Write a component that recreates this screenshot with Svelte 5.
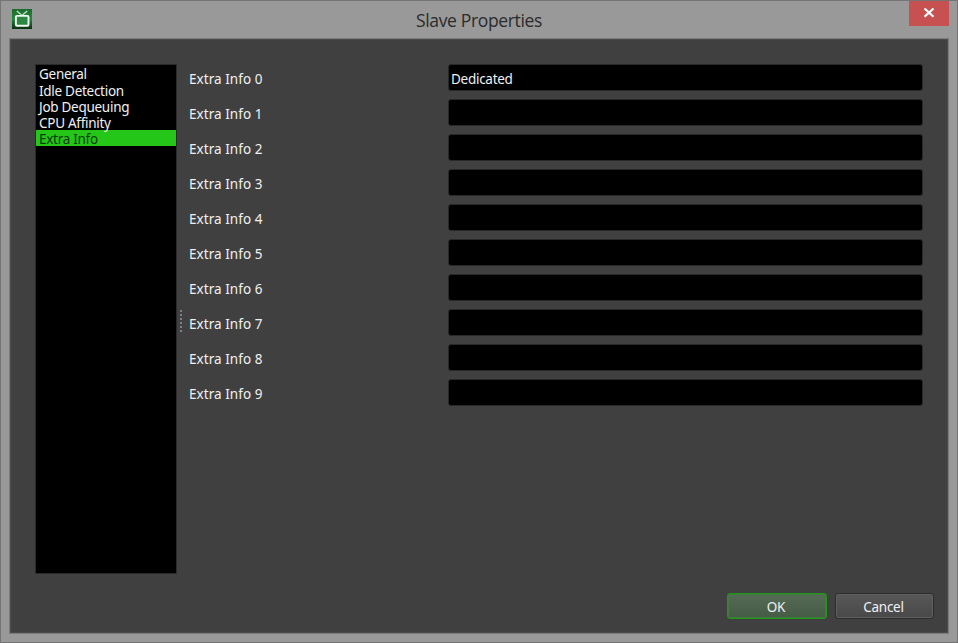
<script>
  const sections = ['General', 'Idle Detection', 'Job Dequeuing', 'CPU Affinity', 'Extra Info'];
  let selected = $state('Extra Info');
  const fields = Array.from({ length: 10 }, (_, i) => ({
    label: `Extra Info ${i}`,
    value: i === 0 ? 'Dedicated' : ''
  }));
</script>

<div class="window">
  <header>
    <svg class="logo" width="20" height="20" viewBox="0 0 20 20">
      <defs>
        <linearGradient id="tv" x1="0" y1="0" x2="0" y2="1">
          <stop offset="0" stop-color="#1c6b2c" />
          <stop offset=".5" stop-color="#25883b" />
          <stop offset="1" stop-color="#083011" />
        </linearGradient>
      </defs>
      <rect width="20" height="20" fill="url(#tv)" />
      <path d="M4.8 2 9.5 6M15.2 2 10.5 6" stroke="#b9dcc0" stroke-width="1.5" fill="none" />
      <rect x="3.9" y="6.9" width="12.6" height="9.8" rx="1" fill="#2a8840" stroke="#f2f8f2" stroke-width="1.9" />
    </svg>
    <h1>Slave Properties</h1>
    <button class="close" aria-label="Close">
      <svg width="12" height="10" viewBox="0 0 12 10"><path d="M1.5 .5 10.5 8.8M10.5 .5 1.5 8.8" stroke="#fff" stroke-width="2.2" /></svg>
    </button>
  </header>
  <main>
    <div class="content">
      <nav>
        {#each sections as section}
          <button class="item" class:selected={selected === section} onclick={() => (selected = section)}>{section}</button>
        {/each}
      </nav>
      <div class="splitter">
        {#each Array(6) as _}<i></i>{/each}
      </div>
      <div class="form">
        {#each fields as field}
          <label><span class="name">{field.label}</span><span class="input">{field.value}</span></label>
        {/each}
      </div>
    </div>
    <footer>
      <button class="action ok">OK</button>
      <button class="action">Cancel</button>
    </footer>
  </main>
</div>

<style>
  * { box-sizing: border-box; }
  .window {
    width: 958px;
    height: 643px;
    padding: 0 8px 8px;
    border: 1px solid #747474;
    background: #999;
    display: flex;
    flex-direction: column;
    font: 13.5px 'Noto Sans', 'Open Sans', sans-serif;
    letter-spacing: -.28px;
    color: #f0f0f0;
    overflow: hidden;
  }
  button { font: inherit; letter-spacing: inherit; border: 0; padding: 0; margin: 0; }
  header { height: 37px; flex: none; display: grid; grid-template-columns: 40px 1fr 40px; }
  .logo { margin: 8px 0 0 3px; }
  h1 {
    margin: 0;
    padding-top: 7px;
    text-align: center;
    font: 400 17.5px/25px 'Open Sans', sans-serif;
    letter-spacing: -.34px;
    color: #2b2b2b;
  }
  .close { width: 40px; height: 25px; background: #c75050; display: flex; align-items: center; justify-content: center; padding-bottom: 1px; }
  main {
    flex: 1;
    border: 1px solid #7b7b7b;
    background: #404040;
    box-shadow: inset 0 0 0 1px #4c4c4c;
    display: flex;
    flex-direction: column;
    padding: 25px 25px 14px;
  }
  .content { display: flex; height: 510px; }
  nav { width: 142px; height: 510px; flex: none; border: 1px solid #2b2b2b; background: #000; }
  .item {
    display: block;
    width: 100%;
    height: 16.3px;
    line-height: 14px;
    padding: 2.3px 0 0 3px;
    background: none;
    color: #f0f0f0;
    text-align: left;
    white-space: nowrap;
  }
  .item.selected { background: #24c718; color: #073b04; }
  .splitter { width: 12px; display: flex; flex-direction: column; align-items: center; justify-content: center; gap: 2px; padding: 3px 4px 0 0; }
  .splitter i { width: 2px; height: 2px; background: #808080; }
  .form { flex: 1; display: flex; flex-direction: column; gap: 8px; }
  label { height: 27px; display: grid; grid-template-columns: 259px 475px; }
  .name { line-height: 31px; letter-spacing: .05px; }
  .input {
    height: 27px;
    border: 1px solid #292929;
    border-radius: 3px;
    background: #000;
    padding-left: 2px;
    line-height: 29px;
  }
  footer { margin-top: auto; display: flex; justify-content: flex-end; gap: 8px; margin-right: -11px; }
  .action {
    width: 99px;
    height: 26px;
    border: 1px solid #2c2c2c;
    border-radius: 3px;
    background: linear-gradient(#585858, #484848);
    box-shadow: inset 0 0 0 1px #606060;
    color: #f0f0f0;
    line-height: 24px;
    padding: 1px 2px 0 0;
  }
  .ok {
    width: 100px;
    border-color: #23931c;
    background: linear-gradient(#556b55, #465b46);
    box-shadow: inset 0 0 0 1px #3d7f3a;
  }
</style>
